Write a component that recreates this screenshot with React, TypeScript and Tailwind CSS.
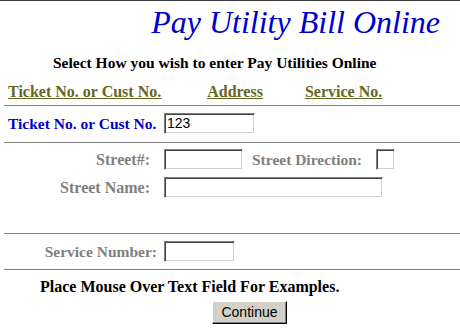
export default function App() {
  const serif = { fontFamily: '"Liberation Serif", "Times New Roman", serif' };
  const inset =
    "h-[21px] border border-[#808080] border-r-white border-b-white bg-white shadow-[inset_1px_1px_0_#404040,inset_-1px_-1px_0_#d4d0c8] px-[2px] text-[14px] text-black outline-none";
  const sans = { fontFamily: '"Liberation Sans", Arial, sans-serif' };
  return (
    <div className="w-[460px] h-[336px] bg-white overflow-hidden border-t border-[#404040]" style={serif}>
      <div className="h-[32px] mt-[5px] flex justify-end pr-[20px] text-[32px] leading-[32px] italic text-[#0000cc]">
        Pay Utility Bill Online
      </div>
      <div className="mt-[16px] pl-[53px] text-[15.5px] leading-[18px] font-bold text-black">
        Select How you wish to enter Pay Utilities Online
      </div>
      <div className="mt-[11px] flex text-[16px] leading-[18px] font-bold text-[#666622] underline">
        <a className="ml-[8px]">Ticket No. or Cust No.</a>
        <a className="ml-[46px]">Address</a>
        <a className="ml-[42px]">Service No.</a>
      </div>
      <hr className="mt-[4px] ml-[4px] border-t border-[#808080]" />
      <div className="mt-[7px] flex items-center h-[21px]">
        <span className="ml-[8px] w-[156px] text-[15.5px] font-bold text-[#0000cc] whitespace-nowrap">Ticket No. or Cust No.</span>
        <input className={inset + " w-[91px]"} style={sans} defaultValue="123" />
      </div>
      <hr className="mt-[8px] ml-[4px] border-t border-[#808080]" />
      <div className="mt-[6px] flex items-center h-[21px] text-[16px] font-bold text-[#808080] whitespace-nowrap">
        <span className="w-[150px] text-right">Street#:</span>
        <span className="w-[14px]" />
        <input className={inset + " w-[79px]"} style={sans} />
        <span className="ml-[9px] w-[124px] text-[15.5px]">Street Direction:</span>
        <input className={inset + " w-[19px]"} style={sans} />
      </div>
      <div className="mt-[7px] flex items-center h-[21px] text-[16px] font-bold text-[#808080] whitespace-nowrap">
        <span className="w-[150px] text-right">Street Name:</span>
        <span className="w-[14px]" />
        <input className={inset + " w-[219px]"} style={sans} />
      </div>
      <hr className="mt-[35px] ml-[4px] border-t border-[#808080]" />
      <div className="mt-[7px] flex items-center h-[21px] text-[16px] font-bold text-[#808080] whitespace-nowrap">
        <span className="w-[157px] text-right text-[15.5px]">Service Number:</span>
        <span className="w-[7px]" />
        <input className={inset + " w-[71px]"} style={sans} />
      </div>
      <hr className="mt-[7px] ml-[4px] border-t border-[#808080]" />
      <div className="mt-[8px] pl-[40px] text-[16px] leading-[18px] font-bold text-black">
        Place Mouse Over Text Field For Examples.
      </div>
      <div className="mt-[5px] flex">
        <button
          className="ml-[212px] w-[75px] h-[23px] bg-[#d4d0c8] border border-white border-r-black border-b-black shadow-[inset_-1px_-1px_0_#808080] text-[14px] text-black"
          style={sans}
        >
          Continue
        </button>
      </div>
    </div>
  );
}
